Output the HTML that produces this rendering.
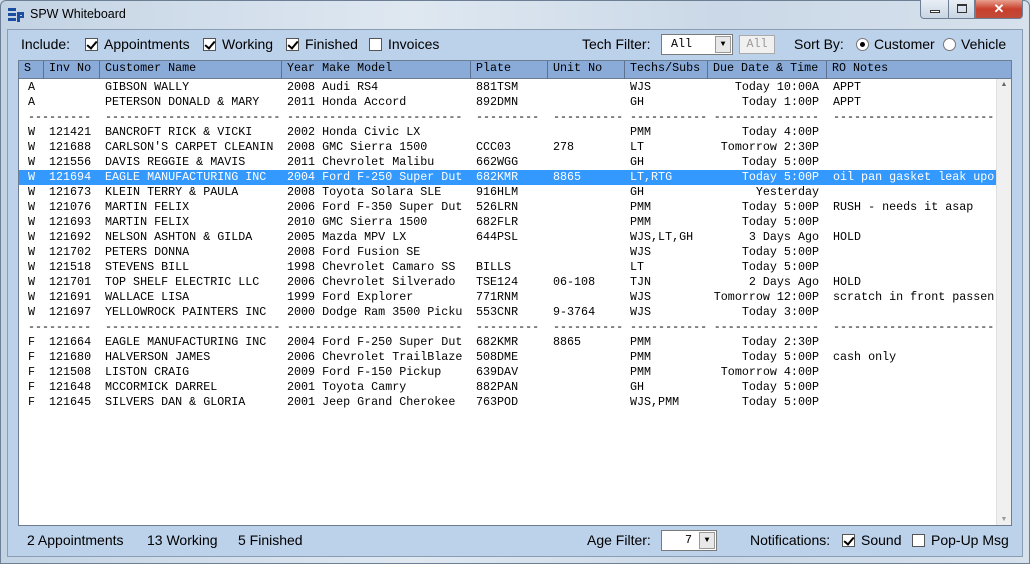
<!DOCTYPE html><html><head><style>
*{margin:0;padding:0;box-sizing:border-box}
body{width:1030px;height:564px;overflow:hidden;background:#cfdbe8;font-family:"Liberation Sans",sans-serif;position:relative}
.frame{position:absolute;left:0;top:0;width:1030px;height:564px;border:1px solid #6d7f94;border-radius:6px 6px 0 0;background:linear-gradient(90deg,#c3d3e4,#dfe8f1 40%,#cad8e7 70%,#d6e1ec)}
.title{position:absolute;left:30px;top:7px;font-size:12.5px;color:#000}
.client{position:absolute;left:7px;top:29px;width:1016px;height:528px;background:#bcd1ea;border:1px solid #8a9db3}
.t{position:absolute;font-size:14px;color:#000;white-space:nowrap}
.cb{position:absolute;width:13px;height:13px;border:1px solid #555;background:#fff}
.cb.k::after{content:"";position:absolute;left:3px;top:0px;width:4px;height:8px;border:solid #000;border-width:0 2px 2px 0;transform:rotate(40deg)}
.rd{position:absolute;width:13px;height:13px;border:1px solid #777;border-radius:50%;background:#fff}
.rd.k::after{content:"";position:absolute;left:3px;top:3px;width:5px;height:5px;border-radius:50%;background:#000}
.grid{position:absolute;left:18px;top:60px;width:994px;height:466px;background:#fff;border:1px solid #6b7d92;overflow:hidden}
.hdr{position:absolute;left:0;top:0;width:992px;height:18px;background:#8aaad8;border-bottom:1px solid #6b7d92}
.hdr span{position:absolute;top:0;height:18px;line-height:19px;border-right:1px solid #5d7190;padding-left:5px;font:11.7px "Liberation Mono",monospace;color:#000}
.r{position:absolute;left:0;width:977px;height:15px;font:11.7px "Liberation Mono",monospace;line-height:15px;color:#000;white-space:pre;overflow:hidden}
.r b{font-weight:normal;position:absolute;top:0}
.r b:nth-child(1){left:9px}.r b:nth-child(2){left:30px}.r b:nth-child(3){left:86px}.r b:nth-child(4){left:268px}
.r b:nth-child(5){left:457px}.r b:nth-child(6){left:534px}.r b:nth-child(7){left:611px}
.r b:nth-child(8){left:680px;width:120px;text-align:right}.r b:nth-child(9){left:814px}
.sel{background:#3399ff;color:#fff}
.sb{position:absolute;left:977px;top:18px;width:15px;height:446px;background:#f0f0f0;border-left:1px solid #e0e0e0}
.btn{position:absolute;top:0;height:19px;border:1px solid #6d7f94;border-top:none}
</style></head><body>
<div class="frame"></div>
<svg style="position:absolute;left:8px;top:7px" width="18" height="16"><rect x="0" y="1" width="8" height="3" fill="#1b4e9e"/><rect x="0" y="6" width="8" height="3" fill="#1b4e9e"/><rect x="0" y="11" width="8" height="3" fill="#1b4e9e"/><rect x="9" y="5" width="7" height="3" fill="#1b4e9e"/><rect x="9" y="9" width="7" height="2" fill="#1b4e9e"/><rect x="9" y="5" width="3" height="10" fill="#1b4e9e"/><rect x="14" y="5" width="2" height="6" fill="#1b4e9e"/></svg>
<div class="title">SPW Whiteboard</div>
<div class="btn" style="left:920px;width:29px;border-radius:0 0 0 4px;background:linear-gradient(#e8eef5,#c9d5e3)"><div style="position:absolute;left:9px;top:10px;width:10px;height:3px;border:1px solid #333;background:#fff"></div></div>
<div class="btn" style="left:948px;width:27px;background:linear-gradient(#e8eef5,#c9d5e3)"><div style="position:absolute;left:8px;top:4px;width:10px;height:9px;border:1px solid #333;border-top-width:2px"></div></div>
<div class="btn" style="left:975px;width:48px;border-radius:0 0 4px 0;background:linear-gradient(#e8a090,#c8402c 50%,#c04a38)"><div style="position:absolute;left:0;width:46px;top:0;text-align:center;color:#fff;font-weight:bold;font-size:13px;line-height:18px">✕</div></div>
<div class="client"></div>
<div class="t" style="left:21px;top:36px">Include:</div>
<div class="cb k" style="left:85px;top:38px"></div><div class="t" style="left:104px;top:36px">Appointments</div>
<div class="cb k" style="left:203px;top:38px"></div><div class="t" style="left:222px;top:36px">Working</div>
<div class="cb k" style="left:286px;top:38px"></div><div class="t" style="left:305px;top:36px">Finished</div>
<div class="cb" style="left:369px;top:38px"></div><div class="t" style="left:388px;top:36px">Invoices</div>
<div class="t" style="left:582px;top:36px">Tech Filter:</div>
<div style="position:absolute;left:661px;top:34px;width:72px;height:21px;border:1px solid #7a7a7a;background:#fff;font:11.7px 'Liberation Mono',monospace;line-height:19px;padding-left:9px">All<div style="position:absolute;right:1px;top:1px;width:16px;height:17px;background:#e8e8e8;border:1px solid #999;font-size:8px;text-align:center;line-height:16px">▼</div></div>
<div style="position:absolute;left:739px;top:35px;width:36px;height:19px;border:1px solid #aaa;background:#f0f0f0;color:#999;font:11.7px 'Liberation Mono',monospace;line-height:17px;text-align:center">All</div>
<div class="t" style="left:794px;top:36px">Sort By:</div>
<div class="rd k" style="left:856px;top:38px"></div><div class="t" style="left:874px;top:36px">Customer</div>
<div class="rd" style="left:943px;top:38px"></div><div class="t" style="left:961px;top:36px">Vehicle</div>
<div class="grid">
<div class="hdr">
<span style="left:0;width:25px">S</span><span style="left:25px;width:56px">Inv No</span><span style="left:81px;width:182px">Customer Name</span><span style="left:263px;width:189px">Year Make Model</span><span style="left:452px;width:77px">Plate</span><span style="left:529px;width:77px">Unit No</span><span style="left:606px;width:83px">Techs/Subs</span><span style="left:689px;width:119px">Due Date &amp; Time</span><span style="left:808px;width:169px;border-right:none">RO Notes</span>
</div>
<div class="r" style="top:19px"><b>A</b><b></b><b>GIBSON WALLY</b><b>2008 Audi RS4</b><b>881TSM</b><b></b><b>WJS</b><b>Today 10:00A</b><b>APPT</b></div>
<div class="r" style="top:34px"><b>A</b><b></b><b>PETERSON DONALD &amp; MARY</b><b>2011 Honda Accord</b><b>892DMN</b><b></b><b>GH</b><b>Today 1:00P</b><b>APPT</b></div>
<div class="r" style="top:49px"><b>---------</b><b></b><b>-------------------------</b><b>-------------------------</b><b>---------</b><b>----------</b><b>-----------</b><b>---------------</b><b>-------------------------</b></div>
<div class="r" style="top:64px"><b>W</b><b>121421</b><b>BANCROFT RICK &amp; VICKI</b><b>2002 Honda Civic LX</b><b></b><b></b><b>PMM</b><b>Today 4:00P</b><b></b></div>
<div class="r" style="top:79px"><b>W</b><b>121688</b><b>CARLSON'S CARPET CLEANIN</b><b>2008 GMC Sierra 1500</b><b>CCC03</b><b>278</b><b>LT</b><b>Tomorrow 2:30P</b><b></b></div>
<div class="r" style="top:94px"><b>W</b><b>121556</b><b>DAVIS REGGIE &amp; MAVIS</b><b>2011 Chevrolet Malibu</b><b>662WGG</b><b></b><b>GH</b><b>Today 5:00P</b><b></b></div>
<div class="r sel" style="top:109px"><b>W</b><b>121694</b><b>EAGLE MANUFACTURING INC</b><b>2004 Ford F-250 Super Dut</b><b>682KMR</b><b>8865</b><b>LT,RTG</b><b>Today 5:00P</b><b>oil pan gasket leak upo</b></div>
<div class="r" style="top:124px"><b>W</b><b>121673</b><b>KLEIN TERRY &amp; PAULA</b><b>2008 Toyota Solara SLE</b><b>916HLM</b><b></b><b>GH</b><b>Yesterday</b><b></b></div>
<div class="r" style="top:139px"><b>W</b><b>121076</b><b>MARTIN FELIX</b><b>2006 Ford F-350 Super Dut</b><b>526LRN</b><b></b><b>PMM</b><b>Today 5:00P</b><b>RUSH - needs it asap</b></div>
<div class="r" style="top:154px"><b>W</b><b>121693</b><b>MARTIN FELIX</b><b>2010 GMC Sierra 1500</b><b>682FLR</b><b></b><b>PMM</b><b>Today 5:00P</b><b></b></div>
<div class="r" style="top:169px"><b>W</b><b>121692</b><b>NELSON ASHTON &amp; GILDA</b><b>2005 Mazda MPV LX</b><b>644PSL</b><b></b><b>WJS,LT,GH</b><b>3 Days Ago</b><b>HOLD</b></div>
<div class="r" style="top:184px"><b>W</b><b>121702</b><b>PETERS DONNA</b><b>2008 Ford Fusion SE</b><b></b><b></b><b>WJS</b><b>Today 5:00P</b><b></b></div>
<div class="r" style="top:199px"><b>W</b><b>121518</b><b>STEVENS BILL</b><b>1998 Chevrolet Camaro SS</b><b>BILLS</b><b></b><b>LT</b><b>Today 5:00P</b><b></b></div>
<div class="r" style="top:214px"><b>W</b><b>121701</b><b>TOP SHELF ELECTRIC LLC</b><b>2006 Chevrolet Silverado</b><b>TSE124</b><b>06-108</b><b>TJN</b><b>2 Days Ago</b><b>HOLD</b></div>
<div class="r" style="top:229px"><b>W</b><b>121691</b><b>WALLACE LISA</b><b>1999 Ford Explorer</b><b>771RNM</b><b></b><b>WJS</b><b>Tomorrow 12:00P</b><b>scratch in front passen</b></div>
<div class="r" style="top:244px"><b>W</b><b>121697</b><b>YELLOWROCK PAINTERS INC</b><b>2000 Dodge Ram 3500 Picku</b><b>553CNR</b><b>9-3764</b><b>WJS</b><b>Today 3:00P</b><b></b></div>
<div class="r" style="top:259px"><b>---------</b><b></b><b>-------------------------</b><b>-------------------------</b><b>---------</b><b>----------</b><b>-----------</b><b>---------------</b><b>-------------------------</b></div>
<div class="r" style="top:274px"><b>F</b><b>121664</b><b>EAGLE MANUFACTURING INC</b><b>2004 Ford F-250 Super Dut</b><b>682KMR</b><b>8865</b><b>PMM</b><b>Today 2:30P</b><b></b></div>
<div class="r" style="top:289px"><b>F</b><b>121680</b><b>HALVERSON JAMES</b><b>2006 Chevrolet TrailBlaze</b><b>508DME</b><b></b><b>PMM</b><b>Today 5:00P</b><b>cash only</b></div>
<div class="r" style="top:304px"><b>F</b><b>121508</b><b>LISTON CRAIG</b><b>2009 Ford F-150 Pickup</b><b>639DAV</b><b></b><b>PMM</b><b>Tomorrow 4:00P</b><b></b></div>
<div class="r" style="top:319px"><b>F</b><b>121648</b><b>MCCORMICK DARREL</b><b>2001 Toyota Camry</b><b>882PAN</b><b></b><b>GH</b><b>Today 5:00P</b><b></b></div>
<div class="r" style="top:334px"><b>F</b><b>121645</b><b>SILVERS DAN &amp; GLORIA</b><b>2001 Jeep Grand Cherokee</b><b>763POD</b><b></b><b>WJS,PMM</b><b>Today 5:00P</b><b></b></div>
<div class="sb"><div style="position:absolute;top:2px;width:14px;text-align:center;font-size:7px;color:#666">▲</div><div style="position:absolute;bottom:2px;width:14px;text-align:center;font-size:7px;color:#999">▼</div></div>
</div>
<div class="t" style="left:27px;top:532px">2 Appointments</div>
<div class="t" style="left:147px;top:532px">13 Working</div>
<div class="t" style="left:238px;top:532px">5 Finished</div>
<div class="t" style="left:587px;top:532px">Age Filter:</div>
<div style="position:absolute;left:661px;top:530px;width:56px;height:21px;border:1px solid #7a7a7a;background:#fff;font:11.7px 'Liberation Mono',monospace;line-height:19px;text-align:right;padding-right:24px;color:#000">7<div style="position:absolute;right:1px;top:1px;width:16px;height:17px;background:#e8e8e8;border:1px solid #999;font-size:8px;text-align:center;line-height:16px">▼</div></div>
<div class="t" style="left:750px;top:532px">Notifications:</div>
<div class="cb k" style="left:842px;top:534px"></div><div class="t" style="left:861px;top:532px">Sound</div>
<div class="cb" style="left:912px;top:534px"></div><div class="t" style="left:931px;top:532px">Pop-Up Msg</div>
</body></html>
